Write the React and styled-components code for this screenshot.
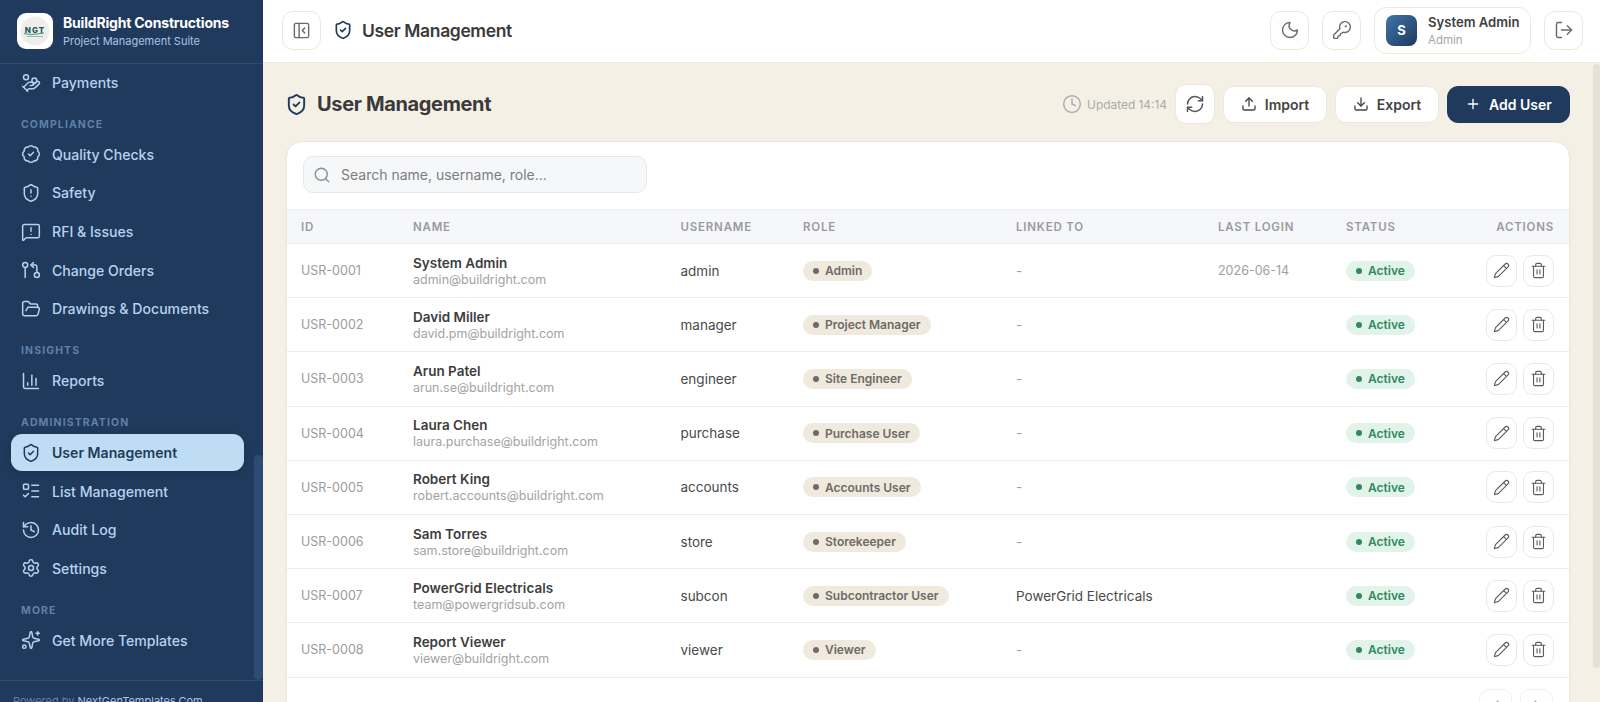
import React from "react";
import styled, { createGlobalStyle } from "styled-components";
import {
  HandCoins, BadgeCheck, ShieldAlert, MessageSquareWarning, GitPullRequestArrow, FolderOpen,
  ChartColumn, ShieldCheck, ListTodo, History, Settings, Sparkles, PanelLeftClose, Moon, KeyRound,
  LogOut, Clock, RefreshCw, Upload, Download, Plus, Search, Pencil, Trash2, ChevronLeft, ChevronRight,
} from "lucide-react";

const Global = createGlobalStyle`
  html, body { margin: 0; padding: 0; height: 100%; overflow: hidden; }
  body { font-family: Inter, "Noto Sans", sans-serif; background: #f5f0e6; color: #3a3a3a; }
  #root { height: 100%; }
  * { box-sizing: border-box; }
`;

const Shell = styled.div`
  display: flex;
  height: 702px;
  width: 1600px;
`;
const Sidebar = styled.aside`
  position: relative;
  width: 263px;
  flex: none;
  height: 702px;
  background: #1f3a5c;
  display: flex;
  flex-direction: column;
  overflow: hidden;
`;
const Brand = styled.div`
  height: 64px;
  flex: none;
  display: flex;
  align-items: center;
  gap: 10px;
  padding: 0 0 1px 17px;
  border-bottom: 1px solid rgba(255, 255, 255, 0.09);
`;
const Logo = styled.div`
  width: 36px;
  height: 36px;
  border-radius: 9px;
  background: #fff;
  display: flex;
  align-items: center;
  justify-content: center;
`;
const BrandText = styled.div`
  padding-top: 2px;
`;
const BrandName = styled.div`
  font-size: 14px;
  font-weight: 700;
  color: #fff;
  line-height: 18px;
  letter-spacing: -0.2px;
  white-space: nowrap;
`;
const BrandSub = styled.div`
  font-size: 11px;
  color: #a9c4e2;
  line-height: 17px;
  margin-top: 1px;
  white-space: nowrap;
`;
const Nav = styled.nav`
  flex: 1;
  min-height: 0;
  padding: 0 19px 0 11px;
  display: flex;
  flex-direction: column;
`;
const NavLabel = styled.div`
  height: 32.8px;
  padding: 15px 0 0 10px;
  margin-top: 0.5px;
  flex: none;
  font-size: 10.5px;
  line-height: 14px;
  font-weight: 700;
  letter-spacing: 1.1px;
  color: #5f80a8;
`;
const NavItem = styled.div`
  height: 37px;
  margin-bottom: 1.6px;
  flex: none;
  display: flex;
  align-items: center;
  gap: 11px;
  padding: 0 10px;
  border-radius: 11px;
  font-size: 14.1px;
  font-weight: ${(p) => (p.$active ? 600 : 500)};
  color: ${(p) => (p.$active ? "#1f3a5c" : "#b7d2ef")};
  background: ${(p) => (p.$active ? "#bfdcf5" : "transparent")};
  box-shadow: ${(p) => (p.$active ? "0 2px 10px rgba(0,0,0,.12)" : "none")};
`;
const SideThumb = styled.div`
  position: absolute;
  right: 0;
  top: 455px;
  width: 9px;
  height: 225px;
  border-radius: 5px;
  background: #2c4c74;
`;
const SideFoot = styled.div`
  height: 22px;
  flex: none;
  border-top: 1px solid rgba(255, 255, 255, 0.09);
  padding: 13px 0 0 13px;
  font-size: 11px;
  line-height: 14px;
  color: #5f80a8;
  white-space: nowrap;
`;
const FootLink = styled.span`
  color: #a9c4e2;
`;
const Right = styled.div`
  position: relative;
  flex: 1;
  min-width: 0;
  display: flex;
  flex-direction: column;
  height: 702px;
`;
const Topbar = styled.header`
  height: 63px;
  flex: none;
  background: #fff;
  border-bottom: 1px solid #efeadf;
  display: flex;
  align-items: center;
  padding: 0 17px 2px 19px;
`;
const IconBtn = styled.button`
  width: ${(p) => p.$w || 39}px;
  height: ${(p) => p.$h || 39}px;
  flex: none;
  padding: 0;
  display: inline-flex;
  align-items: center;
  justify-content: center;
  background: #fff;
  border: 1px solid ${(p) => p.$border || "#ece8df"};
  border-radius: ${(p) => p.$r || 11}px;
  color: ${(p) => p.$color || "#6a6a6a"};
  opacity: ${(p) => (p.$muted ? 0.6 : 1)};
`;
const TopTitle = styled.div`
  display: flex;
  align-items: center;
  gap: 9px;
  margin-left: 12px;
  font-size: 17.5px;
  font-weight: 600;
  color: #3a3a3a;
  letter-spacing: -0.37px;
  & svg { color: #1f3a5c; }
`;
const Spacer = styled.div`
  flex: 1;
`;
const TopActions = styled.div`
  display: flex;
  align-items: center;
  gap: 13px;
`;
const UserCard = styled.div`
  width: 157px;
  height: 47px;
  display: flex;
  align-items: center;
  gap: 11px;
  padding: 0 11px;
  background: #fff;
  border: 1px solid #ece8df;
  border-radius: 12px;
`;
const Avatar = styled.div`
  width: 31px;
  height: 31px;
  flex: none;
  border-radius: 8px;
  background: linear-gradient(135deg, #3f74ab, #1f3a5c);
  color: #fff;
  display: flex;
  align-items: center;
  justify-content: center;
  font-size: 13px;
  font-weight: 700;
`;
const UserName = styled.div`
  font-size: 13.1px;
  font-weight: 600;
  line-height: 18px;
  color: #3f3f3f;
  white-space: nowrap;
`;
const UserRole = styled.div`
  font-size: 11.5px;
  line-height: 16px;
  margin-top: 1px;
  color: #a5a5a5;
`;
const Main = styled.main`
  flex: 1;
  min-height: 0;
  overflow: hidden;
  padding: 21px 30px 6px 23px;
  background: #f5f0e6;
`;
const MainThumb = styled.div`
  position: absolute;
  right: 0;
  top: 64px;
  width: 7px;
  height: 604px;
  border-radius: 4px;
  background: #e7e2d6;
`;
const PageHead = styled.div`
  height: 40px;
  display: flex;
  align-items: center;
  margin-bottom: 17px;
`;
const PageTitle = styled.h1`
  margin: 0;
  display: flex;
  align-items: center;
  gap: 9px;
  font-size: 20px;
  font-weight: 700;
  color: #3a3a3a;
  letter-spacing: -0.35px;
  & svg { color: #1f3a5c; margin-left: -1px; }
`;
const Updated = styled.div`
  display: flex;
  align-items: center;
  gap: 5px;
  font-size: 11.9px;
  color: #aaaaaa;
  margin-right: 8px;
`;
const HeadActions = styled.div`
  display: flex;
  align-items: center;
  gap: 8px;
`;
const Btn = styled.button`
  height: 37px;
  width: ${(p) => p.$w}px;
  display: inline-flex;
  align-items: center;
  justify-content: center;
  gap: 8px;
  font-family: inherit;
  font-size: 14px;
  font-weight: 600;
  border-radius: 11px;
  padding: 0;
  color: ${(p) => (p.$primary ? "#fff" : "#444444")};
  background: ${(p) => (p.$primary ? "#1f3a5c" : "#fff")};
  border: 1px solid ${(p) => (p.$primary ? "#1f3a5c" : "#ece8df")};
`;
const Card = styled.section`
  background: #fff;
  border: 1px solid #ece7dc;
  border-radius: 16px;
  overflow: hidden;
  box-shadow: 0 1px 3px rgba(60, 50, 30, 0.04);
`;
const SearchRow = styled.div`
  height: 67px;
  padding: 14px 16px 0;
`;
const SearchBox = styled.div`
  width: 344px;
  height: 37px;
  display: flex;
  align-items: center;
  gap: 10px;
  padding: 0 9px;
  background: #f6f7f9;
  border: 1px solid #e9e7e1;
  border-radius: 10px;
  font-size: 14px;
  color: #7d7d7d;
  & svg { color: #8c8c8c; }
`;
const COLS = "112px 267.5px 122.5px 213px 202px 128px 108px 1fr";
const HeadRow = styled.div`
  display: grid;
  grid-template-columns: ${COLS};
  height: 35px;
  align-items: center;
  background: #f6f7fa;
  border-top: 1px solid #efeee9;
  border-bottom: 1px solid #ebebe8;
`;
const HeadCell = styled.div`
  padding: 0 ${(p) => (p.$right ? "15px" : "0")} 0 ${(p) => (p.$right ? "0" : "14px")};
  text-align: ${(p) => (p.$right ? "right" : "left")};
  font-size: 11.5px;
  font-weight: 600;
  letter-spacing: 0.8px;
  color: #9b9b9b;
`;
const Row = styled.div`
  display: grid;
  grid-template-columns: ${COLS};
  height: 54.2px;
  align-items: center;
  border-bottom: 1px solid #f0ece3;
`;
const Cell = styled.div`
  padding-left: 14px;
  font-size: 13.5px;
  color: ${(p) => p.$color || "#4a4a4a"};
  white-space: nowrap;
`;
const NameCell = styled(Cell)`
  padding-top: 1px;
`;
const IdCell = styled(Cell)`
  font-size: 12.5px;
  color: #9b9b9b;
`;
const DateCell = styled(Cell)`
  font-size: 12.5px;
  color: #a0a0a0;
`;
const Name = styled.div`
  font-size: 13.5px;
  font-weight: 600;
  line-height: 17px;
  color: #3d3d3d;
`;
const Email = styled.div`
  font-size: 12.5px;
  line-height: 16px;
  color: #a3a3a3;
`;
const Pill = styled.span`
  display: inline-flex;
  align-items: center;
  height: 20px;
  gap: 6px;
  padding: 0 10px;
  border-radius: 10px;
  font-size: 12px;
  font-weight: 600;
  background: ${(p) => (p.$status ? "#e2f3ea" : "#efe9de")};
  color: ${(p) => (p.$status ? "#2f8a5f" : "#6e6b66")};
`;
const Dot = styled.i`
  width: 6px;
  height: 6px;
  border-radius: 50%;
  background: currentColor;
`;
const ActionsCell = styled.div`
  display: flex;
  justify-content: flex-end;
  gap: 6px;
  padding-right: 15px;
`;
const TableFoot = styled.div`
  height: 56px;
  display: flex;
  justify-content: flex-end;
  padding: 11px 16px 0 14px;
`;
const Pager = styled.div`
  display: flex;
  gap: 8px;
`;

const sections = [
  { items: [[HandCoins, "Payments"]] },
  { label: "COMPLIANCE", items: [[BadgeCheck, "Quality Checks"], [ShieldAlert, "Safety"], [MessageSquareWarning, "RFI & Issues"], [GitPullRequestArrow, "Change Orders"], [FolderOpen, "Drawings & Documents"]] },
  { label: "INSIGHTS", items: [[ChartColumn, "Reports"]] },
  { label: "ADMINISTRATION", items: [[ShieldCheck, "User Management", true], [ListTodo, "List Management"], [History, "Audit Log"], [Settings, "Settings"]] },
  { label: "MORE", items: [[Sparkles, "Get More Templates"]] },
];
const users = [
  ["USR-0001", "System Admin", "admin@buildright.com", "admin", "Admin", "-", "2026-06-14"],
  ["USR-0002", "David Miller", "david.pm@buildright.com", "manager", "Project Manager", "-", ""],
  ["USR-0003", "Arun Patel", "arun.se@buildright.com", "engineer", "Site Engineer", "-", ""],
  ["USR-0004", "Laura Chen", "laura.purchase@buildright.com", "purchase", "Purchase User", "-", ""],
  ["USR-0005", "Robert King", "robert.accounts@buildright.com", "accounts", "Accounts User", "-", ""],
  ["USR-0006", "Sam Torres", "sam.store@buildright.com", "store", "Storekeeper", "-", ""],
  ["USR-0007", "PowerGrid Electricals", "team@powergridsub.com", "subcon", "Subcontractor User", "PowerGrid Electricals", ""],
  ["USR-0008", "Report Viewer", "viewer@buildright.com", "viewer", "Viewer", "-", ""],
];

const LogoMark = () => (
  <svg width="30" height="30" viewBox="0 0 30 30" aria-hidden="true">
    <circle cx="15" cy="15" r="14.5" fill="#efeeea" />
    <path d="M4 17.5 Q10 19.5 24 17" stroke="#2f9a8a" strokeWidth="1" fill="none" />
    <text x="15" y="16.5" textAnchor="middle" fontFamily="Inter, sans-serif" fontSize="8" fontWeight="800" letterSpacing="1" fill="#27565f">NGT</text>
    <rect x="7" y="20" width="16" height="1" fill="#a7b0b5" />
  </svg>
);

export default function App() {
  return (
    <Shell>
      <Global />
      <Sidebar>
        <Brand>
          <Logo><LogoMark /></Logo>
          <BrandText>
            <BrandName>BuildRight Constructions</BrandName>
            <BrandSub>Project Management Suite</BrandSub>
          </BrandText>
        </Brand>
        <Nav>
          {sections.map((s, i) => (
            <React.Fragment key={i}>
              {s.label && <NavLabel>{s.label}</NavLabel>}
              {s.items.map(([I, t, a]) => (
                <NavItem key={t} $active={a}>
                  <I size={20} strokeWidth={1.8} />
                  {t}
                </NavItem>
              ))}
            </React.Fragment>
          ))}
        </Nav>
        <SideThumb />
        <SideFoot>Powered by <FootLink>NextGenTemplates.Com</FootLink></SideFoot>
      </Sidebar>
      <Right>
        <Topbar>
          <IconBtn><PanelLeftClose size={19} strokeWidth={1.8} /></IconBtn>
          <TopTitle><ShieldCheck size={20} strokeWidth={2} />User Management</TopTitle>
          <Spacer />
          <TopActions>
            <IconBtn><Moon size={20} strokeWidth={1.7} /></IconBtn>
            <IconBtn><KeyRound size={20} strokeWidth={1.7} /></IconBtn>
            <UserCard>
              <Avatar>S</Avatar>
              <div>
                <UserName>System Admin</UserName>
                <UserRole>Admin</UserRole>
              </div>
            </UserCard>
            <IconBtn><LogOut size={20} strokeWidth={1.7} /></IconBtn>
          </TopActions>
        </Topbar>
        <Main>
          <PageHead>
            <PageTitle><ShieldCheck size={23} strokeWidth={2} />User Management</PageTitle>
            <Spacer />
            <Updated><Clock size={20} strokeWidth={1.7} />Updated 14:14</Updated>
            <HeadActions>
              <IconBtn $w={40} $h={40} $color="#555"><RefreshCw size={20} strokeWidth={1.8} /></IconBtn>
              <Btn $w={104}><Upload size={16} strokeWidth={2} />Import</Btn>
              <Btn $w={104}><Download size={16} strokeWidth={2} />Export</Btn>
              <Btn $w={123} $primary><Plus size={16} strokeWidth={2} />Add User</Btn>
            </HeadActions>
          </PageHead>
          <Card>
            <SearchRow>
              <SearchBox><Search size={18} strokeWidth={1.8} />Search name, username, role...</SearchBox>
            </SearchRow>
            <HeadRow>
              <HeadCell>ID</HeadCell>
              <HeadCell>NAME</HeadCell>
              <HeadCell>USERNAME</HeadCell>
              <HeadCell>ROLE</HeadCell>
              <HeadCell>LINKED TO</HeadCell>
              <HeadCell>LAST LOGIN</HeadCell>
              <HeadCell>STATUS</HeadCell>
              <HeadCell $right>ACTIONS</HeadCell>
            </HeadRow>
            {users.map((u) => (
              <Row key={u[0]}>
                <IdCell>{u[0]}</IdCell>
                <NameCell>
                  <Name>{u[1]}</Name>
                  <Email>{u[2]}</Email>
                </NameCell>
                <Cell>{u[3]}</Cell>
                <Cell><Pill><Dot />{u[4]}</Pill></Cell>
                <Cell $color={u[5] === "-" ? "#a0a0a0" : "#4a4a4a"}>{u[5]}</Cell>
                <DateCell>{u[6]}</DateCell>
                <Cell><Pill $status><Dot />Active</Pill></Cell>
                <ActionsCell>
                  <IconBtn $w={31} $h={32} $r={10} $color="#5c5c5c"><Pencil size={17} strokeWidth={1.6} /></IconBtn>
                  <IconBtn $w={31} $h={32} $r={10} $color="#5c5c5c"><Trash2 size={17} strokeWidth={1.6} /></IconBtn>
                </ActionsCell>
              </Row>
            ))}
            <TableFoot>
              <Pager>
                <IconBtn $w={33} $h={33} $r={10} $muted><ChevronLeft size={16} /></IconBtn>
                <IconBtn $w={33} $h={33} $r={10} $muted><ChevronRight size={16} /></IconBtn>
              </Pager>
            </TableFoot>
          </Card>
        </Main>
        <MainThumb />
      </Right>
    </Shell>
  );
}
